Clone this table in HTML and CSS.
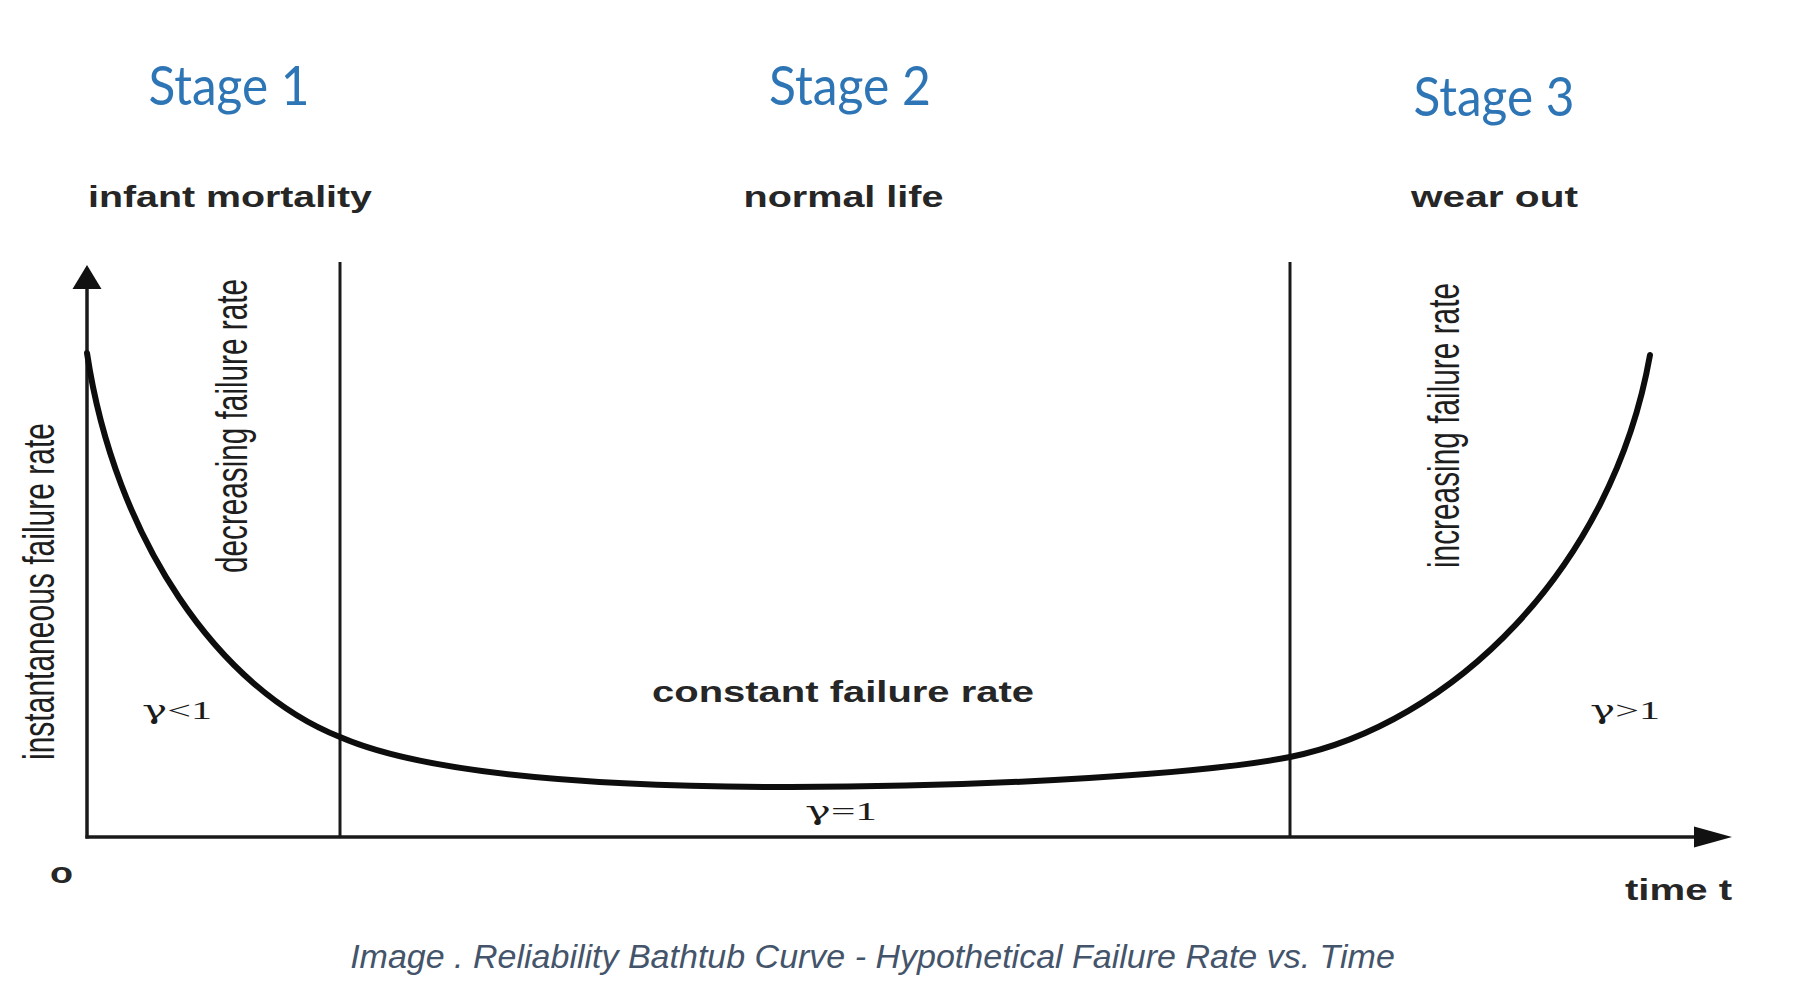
FILE: index.html
```html
<!DOCTYPE html>
<html lang="en">
<head>
<meta charset="utf-8">
<title>Reliability Bathtub Curve</title>
<link rel="stylesheet" href="styles.css">
</head>
<body>
<figure class="figure">
  <svg class="chart" width="1803" height="936" viewBox="0 0 1803 936" xmlns="http://www.w3.org/2000/svg">
    <!-- stage headings -->
    <text class="stage" x="148.5" y="105" textLength="161" lengthAdjust="spacingAndGlyphs">Stage 1</text>
    <text class="stage" x="769" y="105" textLength="162" lengthAdjust="spacingAndGlyphs">Stage 2</text>
    <text class="stage" x="1413.5" y="116" textLength="161" lengthAdjust="spacingAndGlyphs">Stage 3</text>

    <!-- phase labels -->
    <text class="lbl" x="88" y="207" textLength="284" lengthAdjust="spacingAndGlyphs">infant mortality</text>
    <text class="lbl" x="743.5" y="207" textLength="200" lengthAdjust="spacingAndGlyphs">normal life</text>
    <text class="lbl" x="1411" y="207" textLength="167" lengthAdjust="spacingAndGlyphs">wear out</text>

    <!-- axes -->
    <line class="axis" x1="87" y1="285" x2="87" y2="838.5"/>
    <polygon class="head" points="87,265 72.5,289 101.5,289"/>
    <line class="axis" x1="85.5" y1="837" x2="1700" y2="837"/>
    <polygon class="head" points="1732,837 1694,826.5 1694,847.5"/>

    <!-- stage boundaries -->
    <line class="divider" x1="340" y1="262" x2="340" y2="837"/>
    <line class="divider" x1="1290" y1="262" x2="1290" y2="837"/>

    <!-- bathtub curve -->
    <path class="curve" d="M87,353 C115,540 220,690 340,737 C400,763 520,787 791,787 C1000,787 1210,773 1290,757 C1450,725 1612,570 1650,355"/>

    <!-- vertical labels -->
    <text class="vlbl" transform="translate(54,760) rotate(-90)" textLength="337" lengthAdjust="spacingAndGlyphs">instantaneous failure rate</text>
    <text class="vlbl" transform="translate(247,573) rotate(-90)" textLength="294" lengthAdjust="spacingAndGlyphs">decreasing failure rate</text>
    <text class="vlbl" transform="translate(1459,568) rotate(-90)" textLength="285" lengthAdjust="spacingAndGlyphs">increasing failure rate</text>

    <!-- inner labels -->
    <text class="lbl" x="652" y="702" textLength="382" lengthAdjust="spacingAndGlyphs">constant failure rate</text>
    <text class="greek" x="142" y="719" textLength="70" lengthAdjust="spacingAndGlyphs"><tspan class="gamma">γ</tspan>&lt;1</text>
    <text class="greek" x="805" y="820" textLength="72" lengthAdjust="spacingAndGlyphs"><tspan class="gamma">γ</tspan>=1</text>
    <text class="greek" x="1590" y="719" textLength="70" lengthAdjust="spacingAndGlyphs"><tspan class="gamma">γ</tspan>&gt;1</text>

    <text class="lbl" x="50" y="883" textLength="23" lengthAdjust="spacingAndGlyphs">o</text>
    <text class="lbl" x="1625" y="900" textLength="107" lengthAdjust="spacingAndGlyphs">time t</text>
  </svg>
  <figcaption class="caption">Image . Reliability Bathtub Curve - Hypothetical Failure Rate vs. Time</figcaption>
</figure>
</body>
</html>
```

FILE: styles.css
```css
html, body {
  margin: 0;
  padding: 0;
  background: #ffffff;
}

.figure {
  margin: 0;
  width: 1803px;
}

.chart {
  display: block;
}

.stage {
  font-family: Lato, "Open Sans", sans-serif;
  font-size: 54px;
  fill: #2e75b6;
}

.lbl {
  font-family: "Liberation Sans", Arial, sans-serif;
  font-weight: bold;
  font-size: 30px;
  fill: #262626;
}

.vlbl {
  font-family: "Liberation Sans", Arial, sans-serif;
  font-size: 45px;
  fill: #1e1e1e;
}

.greek {
  font-family: "Liberation Serif", "Times New Roman", serif;
  font-size: 26px;
  fill: #1c1c1c;
}

.gamma {
  font-family: "DejaVu Serif", "Liberation Serif", serif;
  font-size: 26px;
}

.axis {
  stroke: #1a1a1a;
  stroke-width: 3.5;
}

.divider {
  stroke: #1a1a1a;
  stroke-width: 3;
}

.head {
  fill: #111111;
}

.curve {
  fill: none;
  stroke: #0d0d0d;
  stroke-width: 6;
  stroke-linecap: round;
}

.caption {
  display: flex;
  justify-content: center;
  padding-right: 58px;
  font-family: "Liberation Sans", Arial, sans-serif;
  font-style: italic;
  font-size: 34px;
  line-height: 40px;
  color: #44546a;
  white-space: nowrap;
}
```
